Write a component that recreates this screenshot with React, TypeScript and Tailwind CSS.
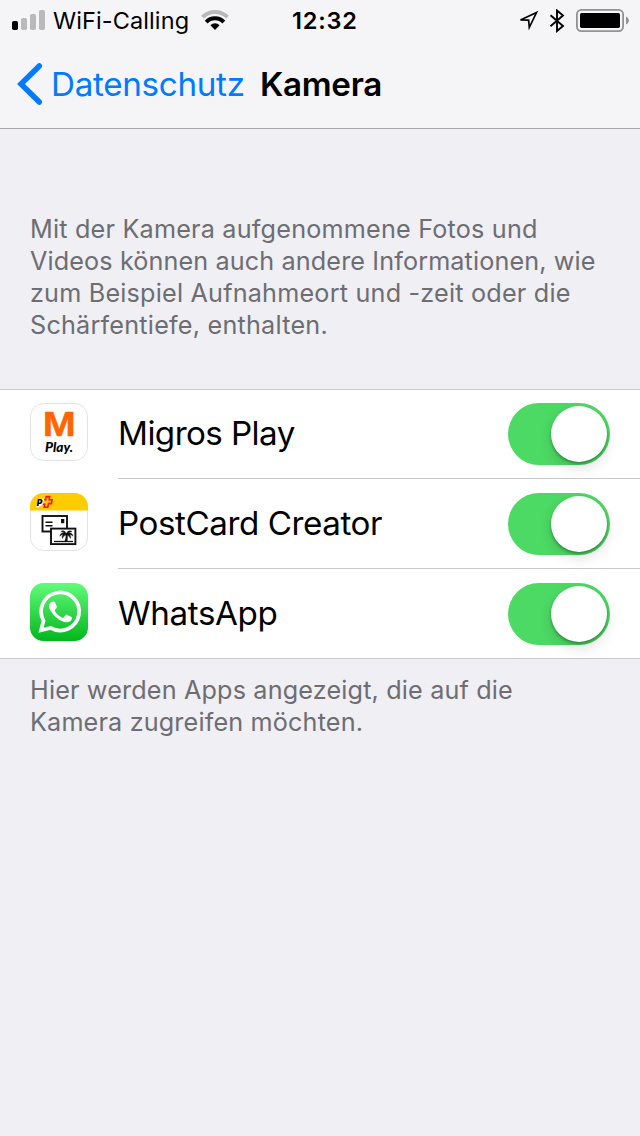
import type { ReactNode } from 'react';

function StatusBar() {
  return (
    <div className="flex h-10 items-center">
      <div className="flex w-[292px] shrink-0 items-center pl-3">
        <svg className="h-5 w-[34px]" viewBox="0 0 34 20">
          <rect x="0" y="11" width="6" height="9" rx="1.8" fill="#000" />
          <rect x="9" y="8" width="6" height="12" rx="1.8" fill="#b9b9bb" />
          <rect x="18" y="4" width="6" height="16" rx="1.8" fill="#b9b9bb" />
          <rect x="27" y="0" width="6" height="20" rx="1.8" fill="#b9b9bb" />
        </svg>
        <span className="ml-[7px] w-[136px] whitespace-nowrap pt-[2px] text-[23.5px] leading-10 tracking-[0.1px]">WiFi-Calling</span>
        <svg className="ml-3 h-5 w-7" viewBox="0 0 28 20">
          <path d="M1.5 7.2a17.7 17.7 0 0 1 25 0" fill="none" stroke="#b9b9bb" strokeWidth="4" />
          <path d="M5.200 12.200a12 12 0 0 1 17.600 0" fill="none" stroke="#000" strokeWidth="4" />
          <path d="M14 20l-4.600-4.800a6.500 6.500 0 0 1 9.200 0z" fill="#000" />
        </svg>
      </div>
      <span className="whitespace-nowrap pt-[2px] text-[23.5px] font-semibold leading-10 tracking-[0.8px]">12:32</span>
      <div className="flex flex-1 items-center justify-end pr-[11px] pt-[2px]">
        <svg className="h-6 w-5" viewBox="0 0 20 24">
          <path d="M1.500 11 17.500 3.500 10.300 18.500 9.600 11.200Z" fill="none" stroke="#000" strokeWidth="1.700" />
        </svg>
        <svg className="ml-[10px] h-6 w-4" viewBox="0 0 16 24">
          <path d="M1.500 6.200 14 17 8 22V1.500L14 6.500 1.500 17.300" fill="none" stroke="#000" strokeWidth="1.9" />
        </svg>
        <svg className="ml-[11px] h-6 w-[53px]" viewBox="0 0 53 24">
          <rect x="0.9" y="0.9" width="46.2" height="21.2" rx="4.5" fill="none" stroke="#929294" strokeWidth="1.8" />
          <rect x="4" y="4" width="40" height="15" rx="1.8" fill="#000" />
          <path d="M50 7.500c3.800 1.500 3.800 6.500 0 8z" fill="#929294" />
        </svg>
      </div>
    </div>
  );
}

function MigrosIcon() {
  return (
    <svg className="size-[58px]" viewBox="0 0 58 58">
      <rect x="0.5" y="0.5" width="57" height="57" rx="13" fill="#fff" stroke="#e3e3e5" />
      <text x="12.700" y="33.400" textLength="33" lengthAdjust="spacingAndGlyphs" fontSize="35.200" fontWeight="700" fill="#ff6600" stroke="#ff6600" strokeWidth="0.500" fontFamily="Liberation Sans, sans-serif">M</text>
      <text x="15" y="49.200" textLength="28" lengthAdjust="spacingAndGlyphs" fontSize="13.500" fontWeight="900" fontStyle="italic" fill="#000" fontFamily="Lato, sans-serif">Play.</text>
    </svg>
  );
}

function PostCardIcon() {
  return (
    <svg className="size-[58px]" viewBox="0 0 58 58">
      <defs>
        <clipPath id="postcard-shape"><rect width="58" height="58" rx="13.5" /></clipPath>
      </defs>
      <rect x="0.5" y="0.5" width="57" height="57" rx="13" fill="#fff" stroke="#e3e3e5" />
      <rect width="58" height="17.500" fill="#ffcc00" clipPath="url(#postcard-shape)" />
      <path d="M6.300 14.300 8 5.800H14l-1.200 6.400-3 .6-.6 1.500z" fill="#fff" />
      <text x="6.800" y="12.600" fontSize="8.500" fontWeight="900" fontStyle="italic" fill="#000" fontFamily="Inter, sans-serif">P</text>
      <path d="M14 6.700h1.700l.6-3.100h3.400l-.6 3.100h3l-.7 3.900h-3l-.6 3.600h-3.600l.5-2.900h-2" fill="none" stroke="#f5140a" strokeWidth="1.600" />
      <rect x="12.500" y="23" width="24.500" height="15.500" fill="#fff" stroke="#111" strokeWidth="1.900" />
      <path d="M15.500 29.300h7M15.500 32.700h7" stroke="#111" strokeWidth="1.600" />
      <rect x="31" y="26" width="3.300" height="4.200" fill="#111" />
      <rect x="21" y="35.600" width="24.400" height="15.500" fill="#fff" stroke="#111" strokeWidth="1.900" />
      <path d="M24 48.500h19" stroke="#111" strokeWidth="1.300" />
      <path d="M34.500 48.300c1.400-3 1.500-5.500.9-8h2c.5 3 .3 5.500 0 8z" fill="#111" />
      <path d="M36.300 41.200C35.500 37.500 32.500 37 30.800 38.700c2 .1 2.700.5 3.500 1.200-2.500-.3-4.300 1-4.500 3.300 1.300-1.200 2.400-1.500 3.500-1.400-1.300 1-1.500 2.300-.8 3.700.8-2.200 2-3.300 3.800-3.500 1.900.2 3.300 1.300 4 3.500.8-1.500.5-2.700-.8-3.700 1.200-.1 2.300.2 3.500 1.400-.2-2.300-2-3.600-4.500-3.300.8-.7 1.600-1.100 3.500-1.200-1.700-1.700-4.900-1.200-5.700 2.500z" fill="#111" stroke="#111" strokeWidth="0.400" />
    </svg>
  );
}

function WhatsAppIcon() {
  return (
    <svg className="size-[58px]" viewBox="0 0 58 58">
      <defs>
        <linearGradient id="whatsapp-green" x1="0" y1="0" x2="0" y2="1">
          <stop offset="0" stopColor="#62fb7b" />
          <stop offset="1" stopColor="#03b61c" />
        </linearGradient>
      </defs>
      <rect width="58" height="58" rx="13.5" fill="url(#whatsapp-green)" />
      <path d="M11 47.300 13.600 37.800A19 19 0 1 1 20.600 44.900Z" fill="none" stroke="#fff" strokeWidth="3.700" />
      <path transform="translate(0 -1)" d="M23.2 19.500c.9 0 1.500.1 1.900 1l1.700 4c.3.800-.1 1.500-1.900 3.500-.3.400-.3.700 0 1.200 1.800 3 4.300 5.100 7.500 6.500.5.200.9.200 1.200-.2l2-2.500c.4-.5.800-.6 1.400-.3l4.200 2c.7.300.9.600.8 1.300-.3 3-3 4.200-5.500 4.200-2.500 0-7-1.800-10.200-4.800-3.200-3-7.200-7.700-7.200-11.200 0-2.500 1.800-4.700 4.100-4.700z" fill="#fff" />
    </svg>
  );
}

function Switch() {
  return (
    <button
      type="button"
      role="switch"
      aria-checked="true"
      className="flex h-[62px] w-[102px] shrink-0 items-center justify-end rounded-full bg-[#4cd964] pr-[3px]"
    >
      <span className="size-14 rounded-full bg-white shadow-[0_6px_14px_rgba(0,0,0,0.13),0_2px_3px_rgba(0,0,0,0.3)]" />
    </button>
  );
}

function AppRow({ icon, children }: { icon: ReactNode; children: ReactNode }) {
  return (
    <div className="group flex h-[90px] pl-[30px] first:h-[89px] last:h-[89px]">
      <div className="w-[88px] shrink-0 pt-[14px] group-first:pt-[13px]">{icon}</div>
      <div className="flex flex-1 items-center border-b border-[#c8c7cc] pr-[30px] group-last:border-b-0">
        <div className="flex-1 whitespace-nowrap pb-[2px] text-[33.2px] leading-[44px]">{children}</div>
        <Switch />
      </div>
    </div>
  );
}

export default function App() {
  return (
    <main className="h-[1136px] w-[640px] overflow-hidden bg-[#efeff4] font-[Inter,sans-serif] text-black">
      <header className="h-[129px] border-b border-[#a7a7ab] bg-[#f5f5f7]">
        <StatusBar />
        <nav className="flex h-[88px] items-center pl-[17px]">
          <svg className="h-[42px] w-[26px]" viewBox="0 0 26 42">
            <path d="M22.300 3 4 21 22.300 39" fill="none" stroke="#007aff" strokeWidth="5.500" strokeLinecap="round" strokeLinejoin="miter" />
          </svg>
          <a className="ml-2 w-[209px] whitespace-nowrap text-[33.2px] leading-[44px] tracking-[-0.3px] text-[#007aff]">Datenschutz</a>
          <h1 className="whitespace-nowrap text-[33.2px] font-semibold leading-[44px] tracking-[-0.3px]">Kamera</h1>
        </nav>
      </header>
      <section className="h-[260px] pl-[30px] pt-[84px] text-[25.2px] leading-8 text-[#6d6d72]">
        <p className="whitespace-nowrap">
          <span className="block tracking-[0.2px]">Mit der Kamera aufgenommene Fotos und</span>
          <span className="block tracking-[0.12px]">Videos können auch andere Informationen, wie</span>
          <span className="block tracking-[0.2px]">zum Beispiel Aufnahmeort und -zeit oder die</span>
          <span className="block tracking-[0.22px]">Schärfentiefe, enthalten.</span>
        </p>
      </section>
      <section className="border-y border-[#c8c7cc] bg-white">
        <AppRow icon={<MigrosIcon />}><span className="tracking-[-0.58px]">Migros Play</span></AppRow>
        <AppRow icon={<PostCardIcon />}><span className="tracking-[-0.45px]">PostCard Creator</span></AppRow>
        <AppRow icon={<WhatsAppIcon />}><span className="tracking-[-0.4px]">WhatsApp</span></AppRow>
      </section>
      <footer className="whitespace-nowrap pl-[30px] pt-[15px] text-[25.2px] leading-8 text-[#6d6d72]">
        <span className="block tracking-[0.16px]">Hier werden Apps angezeigt, die auf die</span>
        <span className="block tracking-[0.16px]">Kamera zugreifen möchten.</span>
      </footer>
    </main>
  );
}
